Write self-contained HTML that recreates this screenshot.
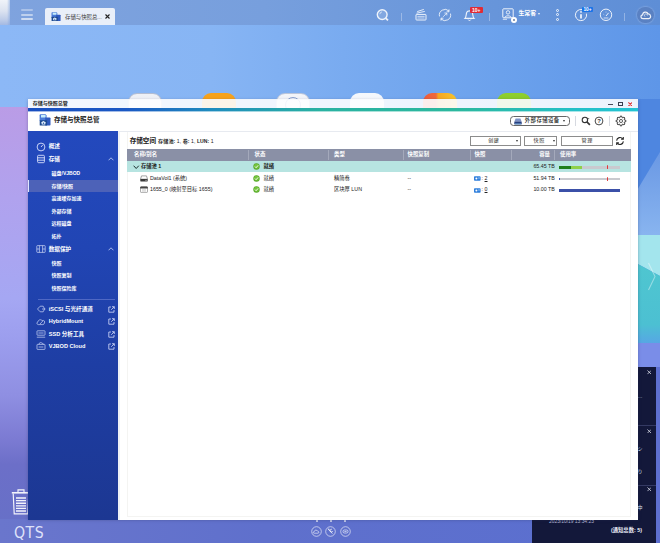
<!DOCTYPE html>
<html lang="zh-CN">
<head>
<meta charset="utf-8">
<title>存储与快照总管</title>
<style>
*{box-sizing:border-box;margin:0;padding:0}
html,body{width:660px;height:543px;overflow:hidden}
body{position:relative;font-family:"Liberation Sans","Noto Sans CJK SC",sans-serif;color:#222;background:#8ab4f2}
.abs{position:absolute}
.t{position:absolute;white-space:nowrap;line-height:1}
/* wallpaper */
#wall{position:absolute;left:0;top:0;width:660px;height:543px;overflow:hidden;
 background:linear-gradient(90deg,#8cb8f6 0%,#87b5f4 32%,#79abf0 52%,#6ba1ec 76%,#5e96e8 100%)}
#leftgrad{position:absolute;left:0;top:107px;width:60px;height:436px;
 background:linear-gradient(180deg,#ba9ce6 0%,#b0a2ee 21%,#a5a7f3 44%,#9c9eee 53%,#8f8fe2 66%,#7c7bd3 76%,#6c6fc8 82%,#6770c7 95%,#6a74ca 100%)}
#botbar{position:absolute;left:0;top:519px;width:660px;height:24px;background:linear-gradient(90deg,#6a76cc 0%,#5f70cc 40%,#5a6fd0 100%)}
/* top bar */
#topbar{position:absolute;left:0;top:0;width:660px;height:25px;background:linear-gradient(90deg,#7fa3de 0%,#779fdd 40%,#6795da 75%,#5e8ed6 100%)}
#corner{position:absolute;left:0;top:0;width:9.5px;height:24.5px;background:linear-gradient(90deg,rgba(255,255,255,0) 0%,rgba(255,255,255,0) 70%,rgba(127,163,222,.55) 100%),linear-gradient(180deg,#f0f3f9 0%,#dbe2f0 45%,#bccbe8 80%,#a4b9e2 100%)}
.hb{position:absolute;left:21.3px;width:11.8px;height:2px;border-radius:1px;background:rgba(255,255,255,.62)}
#tab{position:absolute;left:45px;top:8px;width:70px;height:17px;background:#e9eff9;border-radius:2px 2px 0 0}
.vsep{position:absolute;width:1px;background:rgba(255,255,255,.32)}
/* window */
#win{position:absolute;left:27.5px;top:99.5px;width:610px;height:420.2px;background:transparent;box-shadow:0 0 3px rgba(40,50,90,.35)}
#tbar{position:absolute;left:0;top:-0.5px;width:610px;height:9.2px;background:rgba(252,253,255,.9)}
#gline,#gline2{position:absolute;left:0;top:8.5px;width:610px;height:3px;background:linear-gradient(90deg,#184ec0 0%,#1a58c4 16%,#1f8cbe 30%,#2ab2a2 48%,#2cb89e 70%,#25c0c8 90%,#22c3d3 100%)}
#side{position:absolute;left:0;top:31.5px;width:90px;height:388.7px;background:linear-gradient(180deg,#2349bd 0%,#2145b4 30%,#1e3ea4 60%,#1c3792 100%)}
#cont{position:absolute;left:90px;top:31px;width:520px;height:389.2px;background:#fff;border-top:1px solid #e7eaf0;border-left:2px solid #eef1f6}
#panel{position:absolute;left:7.5px;top:0;width:504px;height:385.5px;border:0.6px solid #f4f4f2;border-top:none}
.sm{color:#fff;font-weight:bold;font-size:5.6px}
.ss{color:#fff;font-weight:bold;font-size:5px}
</style>
</head>
<body>
<div id="wall">
  <svg class="abs" style="left:0;top:0" width="660" height="543" viewBox="0 0 660 543">
    <defs>
      <linearGradient id="gB" x1="0" y1="0" x2="1" y2="0"><stop offset="0" stop-color="#4b82dc"/><stop offset="1" stop-color="#4a7fd8"/></linearGradient>
    </defs>
    <!-- right side wallpaper bands -->
    <defs><linearGradient id="gL" x1="0" y1="0" x2="0" y2="1"><stop offset="0" stop-color="#6a98e4"/><stop offset="1" stop-color="#8ab6f0"/></linearGradient>
    <linearGradient id="gT" x1="0" y1="0" x2="0" y2="1"><stop offset="0" stop-color="#4fc6d0"/><stop offset="0.75" stop-color="#4cc0d2"/><stop offset="1" stop-color="#58a4e6"/></linearGradient></defs>
    <rect x="636" y="99" width="24" height="100" fill="#4e86e0"/>
    <polygon points="636,192 660,152 660,240 636,240" fill="url(#gL)"/>
    <polygon points="636,235 660,235 660,276 636,263" fill="#a3e5ed"/>
    <polygon points="636,263 660,276 660,345 636,345" fill="url(#gT)"/>
    <rect x="636" y="343" width="24" height="25" fill="#7a8de8"/>
    <path d="M648.5 263L655 276.5L648.5 290" fill="none" stroke="rgba(255,255,255,.4)" stroke-width="1.1"/>
  </svg>
  <div id="leftgrad"></div>
  <div id="botbar"></div>
</div>

<!-- DESKTOP -->
<div class="abs" style="left:128px;top:93px;width:34px;height:34px;border-radius:9px;background:linear-gradient(180deg,#eef0f6,#f7f8fb);border:1px solid #b4bdd2;overflow:hidden"></div>
<div class="abs" style="left:202px;top:93px;width:34px;height:34px;border-radius:9px;background:#f7a21b;overflow:hidden"></div>
<div class="abs" style="left:276px;top:93px;width:34px;height:34px;border-radius:9px;background:linear-gradient(180deg,#f2f4f9,#ffffff);border:1px solid #bcc6da;overflow:hidden"><div class="abs" style="left:8px;top:3.4px;width:16px;height:16px;border-radius:8px;border:1.6px solid #8aa2d0"></div></div>
<div class="abs" style="left:350px;top:93px;width:34px;height:34px;border-radius:9px;background:linear-gradient(180deg,#f4f7fc,#ffffff);overflow:hidden"></div>
<div class="abs" style="left:423px;top:93px;width:34px;height:34px;border-radius:9px;background:linear-gradient(90deg,#ee5a3c 0%,#ef6a3a 38%,#f6a623 45%,#f8c62a 100%);overflow:hidden"></div>
<div class="abs" style="left:497px;top:93px;width:34px;height:34px;border-radius:9px;background:linear-gradient(180deg,#8fcf2e,#7cc022);overflow:hidden"></div>
<svg class="abs" style="left:11.4px;top:488.4px" width="20" height="27" viewBox="0 0 20 27" fill="none" stroke="rgba(255,255,255,.92)" stroke-width="1.15"><path d="M7 4V1.8H13V4"/><path d="M0.8 4.8H19.2" stroke-width="1.6"/><path d="M2.2 5.6L3.2 25.8H16.8L17.8 5.6"/><path d="M5 10H15M5 12.6H15M5 15.2H15M5 17.8H15M5 20.4H15M5 23H15" stroke-width="1.35"/></svg>
<div class="t" style="left:13.5px;top:525.3px;font-size:16px;color:rgba(235,238,255,.92);letter-spacing:0.6px;font-family:'DejaVu Sans','Liberation Sans',sans-serif;transform:scaleX(.88);transform-origin:0 0">QTS</div>
<div class="abs" style="left:316px;top:519.6px;width:2px;height:2px;border-radius:1px;background:rgba(255,255,255,.8)"></div>
<div class="abs" style="left:330px;top:519.6px;width:2px;height:2px;border-radius:1px;background:rgba(255,255,255,.8)"></div>
<div class="abs" style="left:344px;top:519.6px;width:2px;height:2px;border-radius:1px;background:rgba(255,255,255,.8)"></div>
<svg class="abs" style="left:310.7px;top:525.5px" width="11" height="11" viewBox="0 0 11 11" fill="none" stroke="rgba(255,255,255,.85)" stroke-width="0.7"><circle cx="5.5" cy="5.5" r="4.8"/><path d="M3 7.2C2 7.2 2 5.6 3.2 5.6C3.4 4 5.8 3.6 6.4 5C7.8 4.8 8.4 7.2 7 7.2Z"/></svg>
<svg class="abs" style="left:325.1px;top:525.5px" width="11" height="11" viewBox="0 0 11 11" fill="none" stroke="rgba(255,255,255,.85)" stroke-width="0.7"><circle cx="5.5" cy="5.5" r="4.8"/><path d="M3.4 3.4L7.4 7.6M3 3L4.6 3.4M6.8 3.2A1.4 1.4 0 1 0 7.8 5.2" stroke-width="0.9"/></svg>
<svg class="abs" style="left:339.7px;top:525.5px" width="11" height="11" viewBox="0 0 11 11" fill="none" stroke="rgba(255,255,255,.85)" stroke-width="0.7"><circle cx="5.5" cy="5.5" r="4.8"/><rect x="3" y="4" width="5" height="3" rx="1.4"/><path d="M4.4 5.5H6.6"/></svg>
<!-- NOTIFICATIONS -->
<div class="abs" style="left:532px;top:367px;width:123.5px;height:176px;background:#13183a"></div>
<div class="abs" style="left:655.5px;top:367px;width:4.5px;height:176px;background:#5d6fd0"></div>
<div class="abs" style="left:532px;top:424.5px;width:123.5px;height:0.8px;background:#343a63"></div>
<div class="abs" style="left:532px;top:484.5px;width:123.5px;height:0.8px;background:#343a63"></div>
<svg class="abs" style="left:646.8px;top:370.1px" width="4.6" height="4.6" viewBox="0 0 5 5"><path d="M0.5 0.5L4.5 4.5M4.5 0.5L0.5 4.5" stroke="#e8eaf5" stroke-width="0.8"/></svg>
<svg class="abs" style="left:646.8px;top:428.6px" width="4.6" height="4.6" viewBox="0 0 5 5"><path d="M0.5 0.5L4.5 4.5M4.5 0.5L0.5 4.5" stroke="#e8eaf5" stroke-width="0.8"/></svg>
<svg class="abs" style="left:646.8px;top:487.3px" width="4.6" height="4.6" viewBox="0 0 5 5"><path d="M0.5 0.5L4.5 4.5M4.5 0.5L0.5 4.5" stroke="#e8eaf5" stroke-width="0.8"/></svg>
<div class="t" style="left:637.5px;top:394px;font-size:5px;color:#dfe3f5">…</div>
<div class="t" style="left:637.5px;top:446px;font-size:5px;color:#dfe3f5">シ</div>
<div class="t" style="left:637.5px;top:468.5px;font-size:5px;color:#dfe3f5">り</div>
<div class="t" style="left:637.5px;top:504.5px;font-size:5px;color:#dfe3f5">中</div>
<div class="t" style="left:549px;top:520.2px;font-size:4.9px;color:#b4b9d6">2023/10/19 13:34:23</div>
<div class="t" style="left:611px;top:528.4px;font-size:5.3px;font-weight:bold;color:#eef0fa">(通知总数: 5)</div>

<!-- TOPBAR -->
<div id="topbar">
  <div id="corner"></div>
  <div class="hb" style="top:9.1px;opacity:.55"></div><div class="hb" style="top:13.6px;opacity:.8"></div><div class="hb" style="top:17.9px;opacity:1"></div>
  <div id="tab">
    <svg class="abs" style="left:5.6px;top:4px" width="10" height="9.4" viewBox="0 0 12 12" preserveAspectRatio="none"><path d="M0.6 1.2Q0.6 0.3 1.5 0.3H6.6L7.6 1.4V7H0.6Z" fill="#4a7bd8"/><rect x="2" y="0.9" width="4.6" height="2.6" rx="0.3" fill="#c8eefb"/><path d="M6.2 3.4H10.6Q11.5 3.4 11.5 4.3V10.8Q11.5 11.6 10.7 11.6H6.2Z" fill="#2f5abf"/><rect x="0.7" y="6.2" width="7.4" height="5.4" rx="0.5" fill="#1d4a90"/><rect x="2.6" y="7.8" width="3.8" height="2.7" rx="0.4" fill="#eaf5ff"/><circle cx="4.5" cy="9.2" r="0.8" fill="#2a5aa8"/><rect x="3.6" y="7.2" width="1.6" height="0.8" fill="#eaf5ff"/></svg>
    <div class="t" style="left:20px;top:6.5px;font-size:5.4px;color:#3a3a3a">存储与快照总...</div>
    <svg class="abs" style="left:59.5px;top:6px" width="5" height="5" viewBox="0 0 5 5"><path d="M0.5 0.5L4.5 4.5M4.5 0.5L0.5 4.5" stroke="#222" stroke-width="1.1"/></svg>
  </div>
  <svg class="abs" style="left:376.3px;top:8.0px" width="14" height="14" viewBox="0 0 14 14" fill="none" stroke="rgba(255,255,255,.88)" stroke-width="0.9" ><circle cx="6.2" cy="6.6" r="4.9" stroke-width="1.4" fill="rgba(255,255,255,.14)"/><path d="M9.9 10.3L12 12.4" stroke-width="1.8"/><path d="M3.8 6.2A2.6 2.6 0 0 1 6 3.9" stroke-width="0.7"/></svg>
  <div class="vsep" style="left:401px;top:13px;height:8px"></div>
  <svg class="abs" style="left:413.7px;top:8.0px" width="14" height="14" viewBox="0 0 14 14" fill="none" stroke="rgba(255,255,255,.88)" stroke-width="0.9" ><rect x="2" y="6.4" width="10" height="5.6" rx="0.6" stroke-width="1"/><path d="M3.4 8.4H10.6M3.4 10H10.6" stroke-width="0.7"/><path d="M2.6 5.2L10.8 3.4M3.2 3.6L9.8 1.4" stroke-width="0.9"/></svg>
  <svg class="abs" style="left:438.4px;top:8.3px" width="14" height="14" viewBox="0 0 14 14" fill="none" stroke="rgba(255,255,255,.88)" stroke-width="0.9" ><path d="M1.5 8.4A5.7 5.7 0 0 1 11 3"/><path d="M12.5 5.6A5.7 5.7 0 0 1 3 11"/><path d="M11 1.4V3.8H8.6M3 12.6V10.2H5.4" stroke-width="0.9"/><path d="M5.2 8.8L8.6 5.2M6.4 5H8.8V7.4" stroke-width="0.8"/></svg>
  <svg class="abs" style="left:462.7px;top:8.2px" width="13" height="14" viewBox="0 0 13 14" fill="none" stroke="rgba(255,255,255,.88)" stroke-width="0.9" ><path d="M2 10.4C3.4 9 3 6 3.8 4.2C4.6 2.4 8.4 2.4 9.2 4.2C10 6 9.6 9 11 10.4Z" stroke-width="1.15"/><path d="M5.2 11.6A1.4 1.4 0 0 0 7.8 11.6" stroke-width="0.9"/></svg>
  <div class="abs" style="left:470px;top:7.3px;width:12.8px;height:5.4px;background:#e02b35;border-radius:1px"></div>
  <div class="t" style="left:472px;top:7.7px;font-size:5px;font-weight:bold;color:#fff">10+</div>
  <div class="vsep" style="left:488.7px;top:13px;height:8px"></div>
  <svg class="abs" style="left:501.6px;top:8.2px" width="12" height="12" viewBox="0 0 12 12" fill="none" stroke="rgba(255,255,255,.88)" stroke-width="0.9" ><rect x="0.8" y="0.8" width="10.4" height="9" rx="0.8" stroke-width="1"/><circle cx="6" cy="4.4" r="1.7" stroke-width="0.9"/><path d="M2.8 9.6C3 7.2 9 7.2 9.2 9.6" stroke-width="0.9"/><path d="M0.8 11.3H5" stroke-width="0.8"/></svg>
  <div class="abs" style="left:510.8px;top:17px;width:6px;height:6px;border-radius:3px;background:#fff"></div><div class="abs" style="left:512.6px;top:18.8px;width:2.4px;height:2.4px;border-radius:1.2px;background:#6d7f9e"></div>
  <div class="t" style="left:518.4px;top:10.7px;font-size:5.9px;font-weight:bold;color:#fff">生常客</div>
  <div class="abs" style="left:538.2px;top:13px;width:0;height:0;border-left:1.7px solid transparent;border-right:1.7px solid transparent;border-top:2.5px solid rgba(255,255,255,.92)"></div>
  <div class="abs" style="left:556.4px;top:9.0px;width:3px;height:3px;border-radius:1.5px;border:0.75px solid rgba(255,255,255,.88)"></div>
  <div class="abs" style="left:556.4px;top:13.4px;width:3px;height:3px;border-radius:1.5px;border:0.75px solid rgba(255,255,255,.88)"></div>
  <div class="abs" style="left:556.4px;top:17.7px;width:3px;height:3px;border-radius:1.5px;border:0.75px solid rgba(255,255,255,.88)"></div>
  <svg class="abs" style="left:573.6px;top:8.2px" width="14" height="14" viewBox="0 0 14 14" fill="none" stroke="rgba(255,255,255,.88)" stroke-width="0.9" ><path d="M10.4 2.6A5.6 5.6 0 1 0 12.4 5.6" stroke-width="1"/><path d="M7 6.2V10.6" stroke-width="1.8"/><circle cx="7" cy="3.9" r="0.9" fill="rgba(255,255,255,.88)" stroke="none"/></svg>
  <div class="abs" style="left:582px;top:7.3px;width:11.2px;height:5.2px;background:#1b74e8;border-radius:1px"></div>
  <div class="t" style="left:583.4px;top:7.6px;font-size:4.8px;font-weight:bold;color:#fff">10+</div>
  <svg class="abs" style="left:598.8px;top:8.2px" width="14" height="14" viewBox="0 0 14 14" fill="none" stroke="rgba(255,255,255,.88)" stroke-width="0.9" ><circle cx="7" cy="6.8" r="5.7" stroke-width="1"/><path d="M7 8L9.6 4.8" stroke-width="1"/><path d="M4.4 6.2L5.2 6.8M7 3.6V4.6" stroke-width="0.6"/><path d="M4.6 10H9.4" stroke-width="0.8"/></svg>
  <div class="vsep" style="left:624px;top:13px;height:8px"></div>
  <div class="abs" style="left:637.4px;top:6.7px;width:16.4px;height:16.4px;border-radius:8.2px;background:rgba(80,100,150,.3);box-shadow:0 0 1.5px 0.7px rgba(205,220,248,.3)"></div>
  <svg class="abs" style="left:640.2px;top:10.1px" width="12" height="10" viewBox="0 0 12 10" fill="none" stroke="rgba(255,255,255,.88)" stroke-width="0.9" ><path d="M3 8.6C0.4 8.6 0.2 5.2 2.6 4.8C2.8 1.6 7.2 1 8 4C10.8 3.6 11.8 8.2 8.8 8.6Z" stroke-width="1.2"/><path d="M5 6.6A1.5 1.5 0 1 1 7.4 5.6" stroke-width="0.7"/></svg>
</div>

<!-- WINDOW -->
<div id="win">
  <div id="tbar"><div class="t" style="left:5.3px;top:2.4px;font-size:5px;font-weight:bold;color:#222">存储与快照总管</div></div>
  <div class="abs" style="left:0;top:11.5px;width:610px;height:20.5px;background:#fff"></div>
  <div id="gline"></div><div id="gline2" style="top:11.5px;height:1px;opacity:.4"></div>
  <div class="abs" style="left:580.7px;top:4.0px;width:4.5px;height:1.1px;background:#444a5a"></div>
  <div class="abs" style="left:590.4px;top:2.5px;width:5.2px;height:4.4px;border:1px solid #3a4050"></div>
  <svg class="abs" style="left:600.4px;top:2.3px" width="4.6" height="4.6" viewBox="0 0 5 5"><path d="M0.4 0.4L4.6 4.6M4.6 0.4L0.4 4.6" stroke="#e03535" stroke-width="1.2"/></svg>
  <svg class="abs" style="left:11.4px;top:14.5px" width="12" height="12" viewBox="0 0 12 12"><path d="M0.6 1.2Q0.6 0.3 1.5 0.3H6.6L7.6 1.4V7H0.6Z" fill="#4a7bd8"/><rect x="2" y="0.9" width="4.6" height="2.6" rx="0.3" fill="#c8eefb"/><path d="M6.2 3.4H10.6Q11.5 3.4 11.5 4.3V10.8Q11.5 11.6 10.7 11.6H6.2Z" fill="#2f5abf"/><rect x="0.7" y="6.2" width="7.4" height="5.4" rx="0.5" fill="#1d4a90"/><rect x="2.6" y="7.8" width="3.8" height="2.7" rx="0.4" fill="#eaf5ff"/><circle cx="4.5" cy="9.2" r="0.8" fill="#2a5aa8"/><rect x="3.6" y="7.2" width="1.6" height="0.8" fill="#eaf5ff"/></svg>
  <div class="t" style="left:26.5px;top:17.5px;font-size:6.5px;font-weight:bold;color:#222">存储与快照总管</div>
  <div class="abs" style="left:482.3px;top:16.2px;width:60.4px;height:10.8px;border:0.7px solid #666;border-radius:3.5px;background:#fff"></div>
  <svg class="abs" style="left:486.4px;top:18.1px" width="8" height="7" viewBox="0 0 8 7"><path d="M1.6 0.6H6.4L7.6 3.6H0.4Z" fill="#7d92c6"/><rect x="0.3" y="3.6" width="7.4" height="2.8" rx="0.4" fill="#273f80"/><rect x="1" y="5.6" width="6" height="0.7" fill="#8fd0f0"/></svg>
  <div class="t" style="left:497.3px;top:18.9px;font-size:5.4px;font-weight:500;color:#222;letter-spacing:0.4px">外部存储设备</div>
  <div class="abs" style="left:535.6px;top:20.4px;width:0;height:0;border-left:1.8px solid transparent;border-right:1.8px solid transparent;border-top:2.6px solid #333"></div>
  <div class="abs" style="left:547.0px;top:16.5px;width:0.7px;height:9.5px;background:#d6d9e0"></div>
  <div class="abs" style="left:581.8px;top:16.5px;width:0.7px;height:9.5px;background:#d6d9e0"></div>
  <svg class="abs" style="left:553.3px;top:16.7px" width="10" height="10" viewBox="0 0 10 10" fill="none" stroke="#333"><circle cx="3.9" cy="3.9" r="2.7" stroke-width="1.1"/><path d="M5.9 5.9L8.9 8.9" stroke-width="1.6"/><path d="M6.4 2.6H8.2" stroke-width="0.7"/></svg>
  <svg class="abs" style="left:566.3px;top:16.5px" width="10" height="10" viewBox="0 0 10 10"><circle cx="5" cy="5" r="3.9" fill="none" stroke="#333" stroke-width="0.9"/><text x="5" y="7.1" font-size="5.8" font-weight="bold" text-anchor="middle" fill="#333" font-family="Liberation Sans, sans-serif">?</text></svg>
  <svg class="abs" style="left:587.6px;top:15.8px" width="12" height="12" viewBox="0 0 12 12"><g transform="translate(6 6)" fill="none" stroke="#333" stroke-linejoin="round"><path d="M3.59 -0.89L4.85 -0.73L4.85 0.73L3.59 0.89L3.17 1.91L3.94 2.91L2.91 3.94L1.91 3.17L0.89 3.59L0.73 4.85L-0.73 4.85L-0.89 3.59L-1.91 3.17L-2.91 3.94L-3.94 2.91L-3.17 1.91L-3.59 0.89L-4.85 0.73L-4.85 -0.73L-3.59 -0.89L-3.17 -1.91L-3.94 -2.91L-2.91 -3.94L-1.91 -3.17L-0.89 -3.59L-0.73 -4.85L0.73 -4.85L0.89 -3.59L1.91 -3.17L2.91 -3.94L3.94 -2.91L3.17 -1.91Z" stroke-width="0.95"/><circle r="1.55" stroke-width="0.8"/></g></svg>
  <div id="side"><div class="abs" style="left:0;top:0.5px;width:90px;height:10px">
    <div class="abs" style="left:0;top:48.2px;width:90px;height:12.2px;background:#4d62b8"></div>
    <div class="abs" style="left:0;top:48.2px;width:1.6px;height:12.2px;background:#dfe6ff"></div>
    <div class="t sm" style="left:21.2px;top:12.7px">概述</div><svg class="abs" style="left:8.0px;top:10.1px" width="10" height="10" viewBox="0 0 10 10" fill="none" stroke="#e3e9ff" stroke-width="0.85"><circle cx="5" cy="5" r="3.9"/><path d="M5 5L6.8 2.9"/></svg>
    <div class="t sm" style="left:21.2px;top:25.5px">存储</div><svg class="abs" style="left:80.0px;top:25.9px" width="6" height="4" viewBox="0 0 6 4"><path d="M0.5 3.3L3 0.8L5.5 3.3" fill="none" stroke="#b4c3f2" stroke-width="0.9"/></svg><svg class="abs" style="left:8.0px;top:22.9px" width="10" height="10" viewBox="0 0 10 10" fill="none" stroke="#e3e9ff" stroke-width="0.85"><rect x="1.6" y="1.3" width="6.8" height="7.4" rx="1"/><path d="M1.6 3.8H8.4M1.6 6.2H8.4"/></svg>
    <div class="t ss" style="left:24.1px;top:39.4px">磁盘/VJBOD</div>
    <div class="t ss" style="left:24.1px;top:52.1px">存储/快照</div>
    <div class="t ss" style="left:24.1px;top:64.4px">高速缓存加速</div>
    <div class="t ss" style="left:24.1px;top:77.1px">外部存储</div>
    <div class="t ss" style="left:24.1px;top:89.7px">远程磁盘</div>
    <div class="t ss" style="left:24.1px;top:102.0px">拓扑</div>
    <div class="t sm" style="left:21.2px;top:115.4px">数据保护</div><svg class="abs" style="left:80.0px;top:115.8px" width="6" height="4" viewBox="0 0 6 4"><path d="M0.5 3.3L3 0.8L5.5 3.3" fill="none" stroke="#b4c3f2" stroke-width="0.9"/></svg><svg class="abs" style="left:8.0px;top:112.8px" width="10" height="10" viewBox="0 0 10 10" fill="none" stroke="#cfd8f6" stroke-width="0.7"><rect x="0.8" y="1.6" width="8.4" height="6.8" rx="0.6"/><path d="M3.4 1.6V8.4M6.6 1.6V8.4M0.8 5H3.4M6.6 5H9.2"/></svg>
    <div class="t ss" style="left:24.1px;top:129.4px">快照</div>
    <div class="t ss" style="left:24.1px;top:141.7px">快照复制</div>
    <div class="t ss" style="left:24.1px;top:154.1px">快照保险库</div>
    <div class="abs" style="left:10.5px;top:167.5px;width:76.5px;height:0.6px;background:#4f68c4"></div>
    <div class="t sm" style="left:21.2px;top:175.1px">iSCSI 与光纤通道</div><svg class="abs" style="left:80.3px;top:174.3px" width="7" height="7" viewBox="0 0 7 7"><path d="M3 1H0.8V6.2H6V4" fill="none" stroke="#dfe6ff" stroke-width="0.75"/><path d="M3.2 3.8L6.2 0.8M4 0.7H6.3V3" fill="none" stroke="#dfe6ff" stroke-width="0.75"/></svg><svg class="abs" style="left:8.0px;top:172.5px" width="10" height="10" viewBox="0 0 10 10" fill="none" stroke="#cfd8f6" stroke-width="0.7"><path d="M1.5 5L4.2 2.2H7.2L8.6 5L7.2 7.8H4.2Z"/><path d="M6 5H9.4"/></svg>
    <div class="t sm" style="left:21.2px;top:187.7px">HybridMount</div><svg class="abs" style="left:80.3px;top:186.9px" width="7" height="7" viewBox="0 0 7 7"><path d="M3 1H0.8V6.2H6V4" fill="none" stroke="#dfe6ff" stroke-width="0.75"/><path d="M3.2 3.8L6.2 0.8M4 0.7H6.3V3" fill="none" stroke="#dfe6ff" stroke-width="0.75"/></svg><svg class="abs" style="left:8.0px;top:185.1px" width="10" height="10" viewBox="0 0 10 10" fill="none" stroke="#cfd8f6" stroke-width="0.7"><path d="M2.2 7.6C0.6 7.4 0.4 5.2 2 4.8C2.2 2.8 4.8 2 6 3.6C7.8 2.8 9.4 4.4 8.4 6.2C8.2 7 7.6 7.6 6.8 7.6Z"/><path d="M4 7L6.8 4"/></svg>
    <div class="t sm" style="left:21.2px;top:200.1px">SSD 分析工具</div><svg class="abs" style="left:80.3px;top:199.3px" width="7" height="7" viewBox="0 0 7 7"><path d="M3 1H0.8V6.2H6V4" fill="none" stroke="#dfe6ff" stroke-width="0.75"/><path d="M3.2 3.8L6.2 0.8M4 0.7H6.3V3" fill="none" stroke="#dfe6ff" stroke-width="0.75"/></svg><svg class="abs" style="left:8.0px;top:197.5px" width="10" height="10" viewBox="0 0 10 10" fill="none" stroke="#cfd8f6" stroke-width="0.7"><rect x="1" y="1.8" width="8" height="4.4" rx="0.5"/><path d="M0.8 8.2H9.2M2.4 4H7.6"/></svg>
    <div class="t sm" style="left:21.2px;top:212.5px">VJBOD Cloud</div><svg class="abs" style="left:80.3px;top:211.70000000000002px" width="7" height="7" viewBox="0 0 7 7"><path d="M3 1H0.8V6.2H6V4" fill="none" stroke="#dfe6ff" stroke-width="0.75"/><path d="M3.2 3.8L6.2 0.8M4 0.7H6.3V3" fill="none" stroke="#dfe6ff" stroke-width="0.75"/></svg><svg class="abs" style="left:8.0px;top:209.9px" width="10" height="10" viewBox="0 0 10 10" fill="none" stroke="#cfd8f6" stroke-width="0.7"><rect x="1" y="3.4" width="8" height="5" rx="0.5"/><path d="M3 3.2C3 1.4 5.4 1 6 2.4C7.4 2.2 7.6 3.2 7.4 3.4M2.6 6H7.4"/></svg>
  </div></div>
  <div id="cont"><div id="panel"></div></div>
  <div class="t" style="left:102.2px;top:38.2px;font-size:6.6px;font-weight:bold;color:#222">存储空间</div>
  <div class="t" style="left:130.6px;top:39.2px;font-size:5.1px;color:#222;letter-spacing:0.06px"><b>存储池:</b> 1, <b>卷:</b> 1, <b>LUN:</b> 1</div>
  <div class="abs" style="left:442.3px;top:36.4px;width:51.2px;height:9.7px;border:0.6px solid #8c8c8c;background:#fff"></div><div class="t" style="left:460.7px;top:38.6px;font-size:5.1px;color:#222;letter-spacing:0.5px">创建</div><div class="abs" style="left:488.9px;top:40.6px;width:0;height:0;border-left:1.5px solid transparent;border-right:1.5px solid transparent;border-top:2.1px solid #333"></div>
  <div class="abs" style="left:496.9px;top:36.4px;width:32.8px;height:9.7px;border:0.6px solid #8c8c8c;background:#fff"></div><div class="t" style="left:506.1px;top:38.6px;font-size:5.1px;color:#222;letter-spacing:0.5px">快照</div><div class="abs" style="left:525.1px;top:40.6px;width:0;height:0;border-left:1.5px solid transparent;border-right:1.5px solid transparent;border-top:2.1px solid #333"></div>
  <div class="abs" style="left:533.3px;top:36.4px;width:51.9px;height:9.7px;border:0.6px solid #8c8c8c;background:#fff"></div><div class="t" style="left:554.05px;top:38.6px;font-size:5.1px;color:#222;letter-spacing:0.5px">管理</div>
  <svg class="abs" style="left:587.2px;top:36.5px" width="10" height="10" viewBox="0 0 10 10" fill="none" stroke="#2a2a2a" stroke-width="1.1"><path d="M1.6 4.6A3.5 3.5 0 0 1 7.8 2.8"/><path d="M8.4 5.4A3.5 3.5 0 0 1 2.2 7.2"/><path d="M8.3 0.9V3.1H6.1" /><path d="M1.7 9.1V6.9H3.9"/></svg>
  <div class="abs" style="left:99.5px;top:49.8px;width:504px;height:11.8px;background:#8a90a6"></div>
  <div class="abs" style="left:220.8px;top:50.8px;width:0.6px;height:9.4px;background:#a4a9bb"></div>
  <div class="abs" style="left:300.6px;top:50.8px;width:0.6px;height:9.4px;background:#a4a9bb"></div>
  <div class="abs" style="left:375.0px;top:50.8px;width:0.6px;height:9.4px;background:#a4a9bb"></div>
  <div class="abs" style="left:442.5px;top:50.8px;width:0.6px;height:9.4px;background:#a4a9bb"></div>
  <div class="abs" style="left:483.5px;top:50.8px;width:0.6px;height:9.4px;background:#a4a9bb"></div>
  <div class="abs" style="left:526.3px;top:50.8px;width:0.6px;height:9.4px;background:#a4a9bb"></div>
  <div class="t" style="left:106.5px;top:52.9px;font-size:5.4px;font-weight:bold;color:#fff">名称/别名</div>
  <div class="t" style="left:227.0px;top:52.9px;font-size:5.4px;font-weight:bold;color:#fff">状态</div>
  <div class="t" style="left:306.5px;top:52.9px;font-size:5.4px;font-weight:bold;color:#fff">类型</div>
  <div class="t" style="left:380.0px;top:52.9px;font-size:5.4px;font-weight:bold;color:#fff">快照复制</div>
  <div class="t" style="left:447.1px;top:52.9px;font-size:5.4px;font-weight:bold;color:#fff">快照</div>
  <div class="t" style="right:87.5px;top:52.9px;font-size:5.4px;font-weight:bold;color:#fff">容量</div>
  <div class="t" style="left:532.5px;top:52.9px;font-size:5.4px;font-weight:bold;color:#fff">使用率</div>
  <div class="abs" style="left:99.5px;top:61.6px;width:504px;height:11.1px;background:#b7e4e1"></div>
  <svg class="abs" style="left:105.8px;top:65.6px" width="7" height="5" viewBox="0 0 7 5"><path d="M0.6 0.7L3.2 3.5L5.8 0.7" fill="none" stroke="#1c2e2e" stroke-width="1"/></svg>
  <div class="t" style="left:113.5px;top:64.7px;font-size:5.3px;color:#222;font-weight:bold;">存储池 1</div>
  <svg class="abs" style="left:225.1px;top:63.8px" width="7" height="7" viewBox="0 0 7 7"><circle cx="3.5" cy="3.5" r="3.2" fill="#58a82c"/><circle cx="3.5" cy="3.3" r="2.5" fill="#74c43c"/><path d="M2 3.6L3.1 4.7L5.1 2.4" fill="none" stroke="#fff" stroke-width="0.9"/></svg>
  <div class="t" style="left:236.0px;top:64.7px;font-size:5.3px;color:#222;font-weight:bold;">就绪</div>
  <div class="t" style="right:82.7px;top:64.7px;font-size:5.3px;color:#222">65.45 TB</div>
  <svg class="abs" style="left:112.1px;top:75.0px" width="8" height="7" viewBox="0 0 8 7"><path d="M1.5 0.9H6.5L7.5 4.2H0.5Z" fill="#fff" stroke="#666" stroke-width="0.6"/><rect x="0.3" y="4" width="7.4" height="2.5" rx="0.4" fill="#3a3a3a"/><rect x="5.4" y="4.9" width="1.3" height="0.7" fill="#ddd"/></svg>
  <div class="t" style="left:122.5px;top:76.0px;font-size:5.3px;color:#222;">DataVol1 (系统)</div>
  <svg class="abs" style="left:225.1px;top:75.5px" width="7" height="7" viewBox="0 0 7 7"><circle cx="3.5" cy="3.5" r="3.2" fill="#58a82c"/><circle cx="3.5" cy="3.3" r="2.5" fill="#74c43c"/><path d="M2 3.6L3.1 4.7L5.1 2.4" fill="none" stroke="#fff" stroke-width="0.9"/></svg>
  <div class="t" style="left:236.0px;top:76.4px;font-size:5.3px;color:#222;">就绪</div>
  <div class="t" style="left:306.5px;top:76.4px;font-size:5.3px;color:#222;">精简卷</div>
  <div class="t" style="left:380.0px;top:76.4px;font-size:5.3px;color:#222;">--</div>
  <div class="t" style="right:82.7px;top:76.4px;font-size:5.3px;color:#222">51.94 TB</div>
  <svg class="abs" style="left:112.1px;top:86.8px" width="8" height="7" viewBox="0 0 8 7"><rect x="0.5" y="0.9" width="7" height="5.5" rx="0.6" fill="#fff" stroke="#777" stroke-width="0.6"/><path d="M0.3 1.2Q0.3 0.5 1 0.5H7Q7.7 0.5 7.7 1.2V2.4H0.3Z" fill="#444"/><path d="M2 3.8H6M2 5H6" stroke="#aaa" stroke-width="0.5"/></svg>
  <div class="t" style="left:122.5px;top:87.4px;font-size:5.3px;color:#222;">1655_0 (映射至目标 1655)</div>
  <svg class="abs" style="left:225.1px;top:86.9px" width="7" height="7" viewBox="0 0 7 7"><circle cx="3.5" cy="3.5" r="3.2" fill="#58a82c"/><circle cx="3.5" cy="3.3" r="2.5" fill="#74c43c"/><path d="M2 3.6L3.1 4.7L5.1 2.4" fill="none" stroke="#fff" stroke-width="0.9"/></svg>
  <div class="t" style="left:236.0px;top:87.8px;font-size:5.3px;color:#222;">就绪</div>
  <div class="t" style="left:306.5px;top:87.8px;font-size:5.3px;color:#222;">区块厚 LUN</div>
  <div class="t" style="left:380.0px;top:87.8px;font-size:5.3px;color:#222;">--</div>
  <div class="t" style="right:82.7px;top:87.8px;font-size:5.3px;color:#222">10.00 TB</div>
  <svg class="abs" style="left:446.3px;top:76.6px" width="7" height="5" viewBox="0 0 7 5"><rect x="0" y="0.2" width="6.6" height="4.6" rx="0.8" fill="#2f7fdc"/><circle cx="2.4" cy="2.5" r="1" fill="#fff"/><rect x="4.2" y="1.6" width="1.6" height="0.8" fill="#bfe0ff"/></svg><div class="t" style="left:454.1px;top:76.4px;font-size:5.3px;color:#222">: <span style="text-decoration:underline">2</span></div>
  <svg class="abs" style="left:446.3px;top:88.0px" width="7" height="5" viewBox="0 0 7 5"><rect x="0" y="0.2" width="6.6" height="4.6" rx="0.8" fill="#2f7fdc"/><circle cx="2.4" cy="2.5" r="1" fill="#fff"/><rect x="4.2" y="1.6" width="1.6" height="0.8" fill="#bfe0ff"/></svg><div class="t" style="left:454.1px;top:87.8px;font-size:5.3px;color:#222">: <span style="text-decoration:underline">0</span></div>
  <div class="abs" style="left:531.1px;top:66.6px;width:61.1px;height:2.6px;background:#c9cacf"></div><div class="abs" style="left:531.1px;top:66.6px;width:12.4px;height:2.6px;background:#1f7f1c"></div><div class="abs" style="left:543.5px;top:66.6px;width:10.5px;height:2.6px;background:#8fd14a"></div><div class="abs" style="left:579.4px;top:65.7px;width:1.2px;height:4px;background:#e03a3a;border-radius:0.6px"></div>
  <div class="abs" style="left:531.1px;top:78.3px;width:61.1px;height:2.6px;background:#c9cacf"></div><div class="abs" style="left:531.1px;top:78.3px;width:1.0px;height:2.6px;background:#3a55b0"></div><div class="abs" style="left:579.4px;top:77.4px;width:1.2px;height:4px;background:#e03a3a;border-radius:0.6px"></div>
  <div class="abs" style="left:531.1px;top:89.7px;width:61.1px;height:2.6px;background:#c9cacf"></div><div class="abs" style="left:531.1px;top:89.7px;width:61.1px;height:2.6px;background:#3b50a8"></div>
</div>
</body>
</html>
